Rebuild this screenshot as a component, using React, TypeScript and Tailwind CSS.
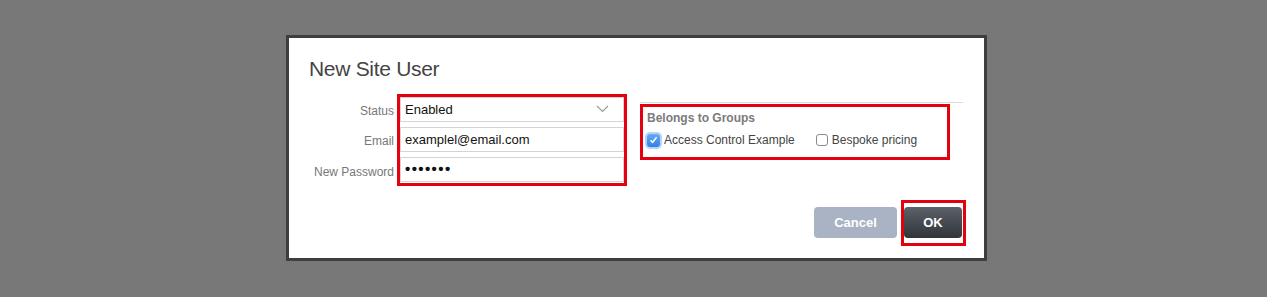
import React from 'react';

const font = { fontFamily: '"Liberation Sans", Arial, sans-serif' };

function Field({ children, right }: { children: React.ReactNode; right?: React.ReactNode }) {
    return (
        <div className="flex items-center h-[25px] w-full border border-[#d4d4d4] bg-white pl-[4px] pr-[14px] text-[13px] text-[#111]">
            <div className="flex-1">{children}</div>
            {right}
        </div>
    );
}

export default function App() {
    return (
        <div className="w-full h-[297px] bg-[#787878] pt-[35px] pl-[286px]" style={font}>
            <div className="w-[701px] h-[226px] border-[3px] border-[#3e3e3e] bg-white flex flex-col">
                {/* Title */}
                <h1 className="mt-[19px] ml-[20px] text-[21px] leading-[24px] text-[#444] font-normal tracking-[-0.3px]">
                    New Site User
                </h1>

                {/* Body */}
                <div className="flex mt-[13px] ml-[20px]">
                    <div className="w-[85px] flex flex-col gap-[5px] pt-[3px] text-[12px] text-[#777] text-right">
                        <div className="h-[25px] leading-[28px]">Status</div>
                        <div className="h-[25px] leading-[28px]">Email</div>
                        <div className="h-[25px] leading-[30px] whitespace-nowrap">New Password</div>
                    </div>

                    <div className="ml-[3px] w-[230px] h-[92px] border-[3px] border-[#e3000f] flex flex-col gap-[5px]">
                        <Field
                            right={
                                <svg width="13" height="8" viewBox="0 0 13 8" className="-mt-[2px]">
                                    <polyline points="1,1 6.5,6.5 12,1" fill="none" stroke="#9a9a9a" strokeWidth="1.1" />
                                </svg>
                            }
                        >
                            Enabled
                        </Field>
                        <Field>examplel@email.com</Field>
                        <Field>
                            <span className="text-[15px] tracking-[1.4px] font-bold leading-[15px]">•••••••</span>
                        </Field>
                    </div>

                    <div className="ml-[13px] w-[323px] pt-[8px]">
                        <div className="border-t border-[#dcdcdc]" />
                        <div className="mt-[1px] w-[310px] h-[56px] border-[3px] border-[#e3000f] pl-[4px] pt-[4px]">
                            <div className="text-[12px] font-bold text-[#7a7a7a] leading-[14px]">Belongs to Groups</div>
                            <div className="flex items-center mt-[6px] text-[12px] text-[#444]">
                                <span className="w-[13px] h-[13px] rounded-[3px] bg-gradient-to-b from-[#6aaaf2] to-[#2f7fe6] shadow-[0_0_0_2px_rgba(90,160,240,0.45)] flex items-center justify-center">
                                    <svg width="9" height="8" viewBox="0 0 9 8">
                                        <polyline points="1.5,4.2 3.6,6.3 7.6,1.3" fill="none" stroke="#fff" strokeWidth="1.5" />
                                    </svg>
                                </span>
                                <span className="ml-[4px]">Access Control Example</span>
                                <span className="ml-[21px] w-[12px] h-[12px] rounded-[3px] border border-[#8a8a8a] bg-white" />
                                <span className="ml-[4px]">Bespoke pricing</span>
                            </div>
                        </div>
                    </div>
                </div>

                {/* Buttons */}
                <div className="flex justify-end items-start mt-[14px] pr-[18px]">
                    <button className="mt-[7px] w-[83px] h-[31px] rounded-[4px] bg-[#a9b3c3] text-white text-[13px] font-bold">
                        Cancel
                    </button>
                    <div className="ml-[4px] border-[3px] border-[#e3000f] pt-[4px] pr-[1px] pb-[5px]">
                        <button className="w-[58px] h-[31px] rounded-[4px] bg-gradient-to-b from-[#5c6269] to-[#31353a] text-white text-[13px] font-bold">
                            OK
                        </button>
                    </div>
                </div>
            </div>
        </div>
    );
}
